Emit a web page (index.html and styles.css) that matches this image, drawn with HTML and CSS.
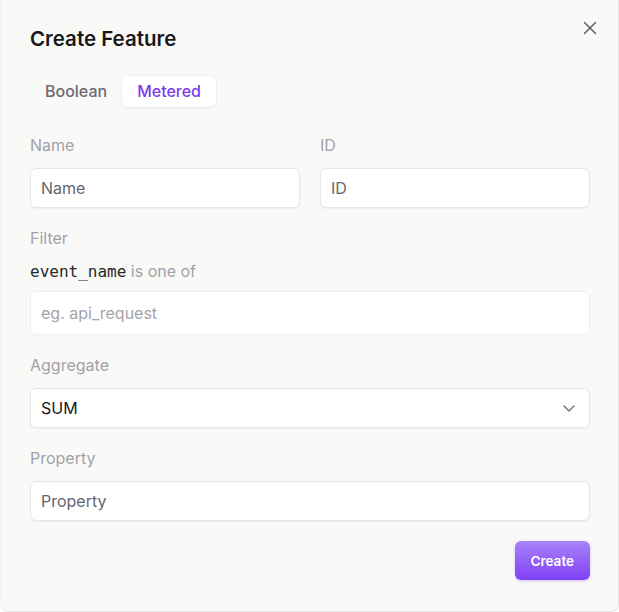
FILE: index.html
```html
<!DOCTYPE html>
<html lang="en">
<head>
<meta charset="utf-8">
<title>Create Feature</title>
<link rel="stylesheet" href="styles.css">
</head>
<body>
<div class="dialog">
  <button class="close" aria-label="Close">
    <svg width="16" height="16" viewBox="0 0 16 16" fill="none" stroke="#5f5f66" stroke-width="1.5" stroke-linecap="round"><path d="M2.5 2.5L13.5 13.5M13.5 2.5L2.5 13.5"/></svg>
  </button>
  <h1 class="title">Create Feature</h1>
  <div class="tabs">
    <div class="tab">Boolean</div>
    <div class="tab active">Metered</div>
  </div>
  <div class="row">
    <div class="field">
      <label class="label">Name</label>
      <div class="input value">Name</div>
    </div>
    <div class="field">
      <label class="label">ID</label>
      <div class="input value">ID</div>
    </div>
  </div>
  <div class="field">
    <label class="label">Filter</label>
    <div class="filter-line"><code class="mono">event_name</code> is one of</div>
    <div class="input tall placeholder">eg. api_request</div>
  </div>
  <div class="field">
    <label class="label">Aggregate</label>
    <div class="input select"><span class="strong">SUM</span>
      <svg class="chev" width="12" height="7" viewBox="0 0 12 7" fill="none" stroke="#77777e" stroke-width="1.5" stroke-linecap="round" stroke-linejoin="round"><path d="M1 1L6 6L11 1"/></svg>
    </div>
  </div>
  <div class="field">
    <label class="label">Property</label>
    <div class="input value">Property</div>
  </div>
  <div class="footer">
    <button class="create">Create</button>
  </div>
</div>
</body>
</html>
```
FILE: styles.css
```css
* { box-sizing: border-box; }
html, body { margin: 0; padding: 0; }
body {
  font-family: Inter, "Liberation Sans", sans-serif;
  background: #ffffff;
}
.dialog {
  position: relative;
  width: 619px;
  height: 612px;
  background: #f9f9f8;
  border: 1px solid #e7e7e6;
  border-top: none;
  border-left-color: #f3f3f2;
  border-radius: 0 0 8px 8px;
  padding: 25px 28px 0 29px;
  display: flex;
  flex-direction: column;
  gap: 20px;
}
.close {
  position: absolute;
  top: 20px;
  right: 20px;
  width: 16px;
  height: 16px;
  padding: 0;
  border: none;
  background: none;
  display: flex;
}
.title {
  margin: 0 0 3px 0;
  font-size: 20.5px;
  line-height: 28px;
  font-weight: 600;
  color: #18181b;
}
.tabs {
  display: flex;
  margin-bottom: 8px;
}
.tab {
  padding: 5px 15px;
  font-size: 16px;
  line-height: 21px;
  font-weight: 500;
  color: #6b6b73;
  border-radius: 6px;
}
.tab.active {
  background: #ffffff;
  color: #7c3aed;
  box-shadow: 0 1px 3px rgba(0,0,0,0.08), 0 0 0 1px rgba(0,0,0,0.02);
}
.row {
  display: grid;
  grid-template-columns: 1fr 1fr;
  gap: 20px;
}
.field {
  display: flex;
  flex-direction: column;
}
.label {
  font-size: 16px;
  line-height: 21px;
  color: #a1a1a8;
  margin-bottom: 12px;
}
.filter-line {
  height: 20px;
  font-size: 16px;
  line-height: 20px;
  color: #a1a1a8;
  margin-bottom: 10px;
  white-space: nowrap;
}
.mono {
  font-family: "DejaVu Sans Mono", "Liberation Mono", monospace;
  font-size: 16px;
  line-height: 20px;
  color: #27272a;
}
.input {
  height: 40px;
  background: #ffffff;
  border: 1px solid #e6e6e6;
  border-radius: 6px;
  box-shadow: 0 1px 2px rgba(0,0,0,0.05);
  padding: 0 10px;
  display: flex;
  align-items: center;
  font-size: 16px;
}
.input.tall {
  height: 44px;
  border-color: #efefee;
  box-shadow: 0 1px 1px rgba(0,0,0,0.02);
}
.value { color: #66666e; }
.placeholder { color: #a3a3aa; }
.strong { color: #18181b; }
.select { justify-content: space-between; padding-right: 14px; }
.chev { display: block; }
.footer {
  display: flex;
  justify-content: flex-end;
}
.create {
  height: 39px;
  padding: 0 16px;
  border: none;
  border-radius: 6px;
  background: linear-gradient(180deg, #a783f9 0%, #8040f5 100%);
  color: #ffffff;
  font-family: Inter, "Liberation Sans", sans-serif;
  font-size: 13.5px;
  font-weight: 600;
  box-shadow: 0 1px 3px rgba(124,58,237,0.3);
}
```
